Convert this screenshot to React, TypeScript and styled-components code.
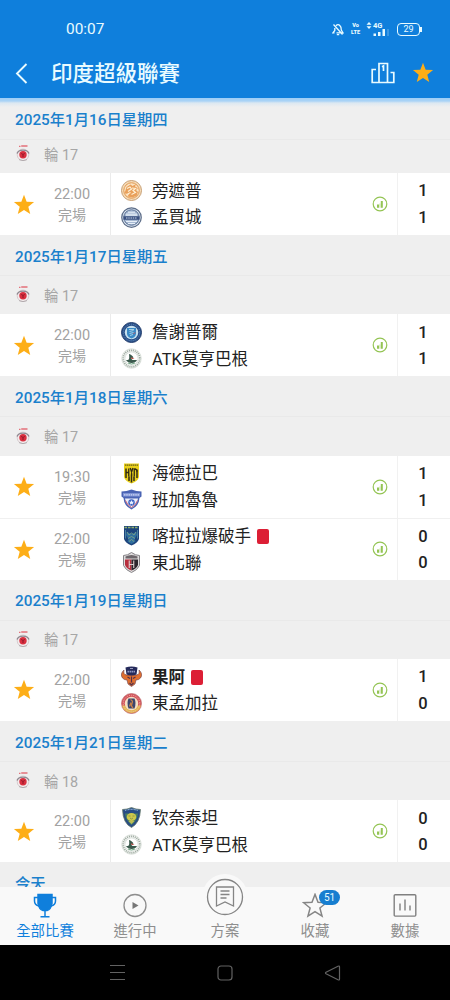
import React from 'react'
import styled, { createGlobalStyle } from 'styled-components'

const GlobalStyle = createGlobalStyle`
  * {
    box-sizing: border-box;
  }
  body {
    margin: 0;
    font-family: Roboto, 'Noto Sans CJK TC', sans-serif;
  }
  svg {
    display: block;
  }
`

const BLUE = '#0f7fdc'
const ORANGE = '#fdae17'

const Screen = styled.div`
  width: 450px;
  height: 1000px;
  display: flex;
  flex-direction: column;
  overflow: hidden;
  background: #efefef;
`

const Header = styled.header`
  height: 98px;
  flex: none;
  background: ${BLUE};
  color: #e9fbff;
`

const StatusBar = styled.div`
  height: 57px;
  padding: 1px 28px 0 66px;
  display: flex;
  align-items: center;
`

const Clock = styled.span`
  font-size: 15.4px;
  flex-grow: 1;
`

const StatusIcons = styled.div`
  display: flex;
  align-items: center;
`

const VoLte = styled.div`
  width: 11px;
  margin: 0 5px 0 6px;
  display: flex;
  flex-direction: column;
  align-items: center;
  font-size: 5.6px;
  font-weight: 900;
  line-height: 6.6px;
`

const Signal = styled.div`
  width: 26px;
  margin-right: 5px;
  display: flex;
  flex-direction: column;
`

const Network = styled.div`
  display: flex;
  align-items: center;
  gap: 1px;
  font-size: 7.5px;
  font-weight: 700;
  line-height: 6px;
`

const Battery = styled.div`
  display: flex;
  align-items: center;

  &::after {
    content: '';
    width: 2px;
    height: 5px;
    background: #e9fbff;
  }
`

const BatteryLevel = styled.span`
  width: 23px;
  height: 13px;
  border: 1.5px solid #e9fbff;
  border-radius: 4px;
  font-size: 9px;
  line-height: 11px;
  text-align: center;
`

const TitleBar = styled.div`
  height: 33px;
  padding: 0 16px 0 15px;
  display: flex;
  align-items: center;
`

const Title = styled.h1`
  margin: 0 0 0 21px;
  font-size: 21.5px;
  line-height: 33px;
  font-weight: 500;
  flex-grow: 1;
`

const TitleActions = styled.div`
  display: flex;
  align-items: center;
  gap: 17px;
  padding-bottom: 2px;
`

const List = styled.main`
  flex: 1;
  min-height: 0;
  overflow: hidden;
  background: linear-gradient(#9dcdf6 0, #a9d3f6 3px, #dce8f1 5px, #efefef 9px);
`

const DateRow = styled.div<{ $sticky?: boolean }>`
  height: ${props => (props.$sticky ? 42 : 41.1)}px;
  padding: 0 15px 1px;
  display: flex;
  align-items: center;
  border-bottom: 1px solid #e9e9e9;
  color: #1a80cc;
  font-size: 15.3px;
  font-weight: 500;
  white-space: nowrap;
`

const RoundRow = styled.div<{ $first?: boolean }>`
  height: ${props => (props.$first ? 33 : 38.1)}px;
  padding: 0 15px ${props => (props.$first ? 7 : 2)}px;
  display: flex;
  align-items: center;
  gap: 13px;
  color: #a6a6a6;
  font-size: 14.4px;
`

const MatchRow = styled.div`
  height: 62.1px;
  display: flex;
  background: #fff;

  & + & {
    border-top: 1px solid #f0f0f0;
  }
`

const StarCell = styled.div`
  width: 48px;
  padding-top: 1px;
  display: flex;
  align-items: center;
  justify-content: center;
`

const TimeCell = styled.div`
  width: 63px;
  padding: 2px 14px 0 0;
  border-right: 1px solid #ebebeb;
  display: flex;
  flex-direction: column;
  align-items: center;
  justify-content: center;
  color: #a2a2a2;
  font-size: 14.5px;
  line-height: 20px;
`

const Status = styled.span`
  font-size: 14px;
`

const Teams = styled.div`
  flex: 1;
  padding-left: 10px;
  display: flex;
  flex-direction: column;
  justify-content: center;
`

const Team = styled.div<{ $bold?: boolean }>`
  height: 26.6px;
  display: flex;
  align-items: center;
  color: #222;
  font-size: 16.5px;
  font-weight: ${props => (props.$bold ? 700 : 400)};
  white-space: nowrap;
`

const TeamName = styled.span`
  margin-left: 10px;
  padding-top: 2px;
  line-height: 24px;
`

const RedCard = styled.span`
  width: 12px;
  height: 15px;
  margin: 1px 0 0 6px;
  border-radius: 2px;
  background: #dc1f35;
`

const StatsCell = styled.div`
  width: 35px;
  display: flex;
  align-items: center;
  justify-content: center;
`

const ScoreCell = styled.div`
  width: 53px;
  padding: 2px 2px 0 0;
  border-left: 1px solid #f1f1f1;
  display: flex;
  flex-direction: column;
  align-items: center;
  justify-content: center;
  color: #222;
  font-size: 16.5px;
  font-weight: 500;
  line-height: 26.6px;
`

const Nav = styled.nav`
  height: 58px;
  flex: none;
  display: flex;
  background: #f9f9f9;
`

const NavItem = styled.div<{ $active?: boolean }>`
  width: 90px;
  position: relative;
  padding-top: 6px;
  display: flex;
  flex-direction: column;
  align-items: center;
  color: ${props => (props.$active ? BLUE : '#8e8e8e')};
  font-size: 14.4px;
  line-height: 25px;
`

const NavLabel = styled.span`
  margin-top: 1px;
  white-space: nowrap;
`

// raised round button in the middle of the tab bar
const PlanButton = styled.div`
  position: absolute;
  left: 22px;
  top: -13px;
  width: 46px;
  height: 46px;
  border-radius: 50%;
  background: #f9f9f9;
  display: flex;
  align-items: center;
  justify-content: center;
`

const PlanSpacer = styled.div`
  height: 25px;
`

const Badge = styled.span`
  position: absolute;
  left: 49px;
  top: 3px;
  width: 21px;
  height: 15px;
  border-radius: 8px;
  background: #177ed0;
  color: #e9fbff;
  font-size: 10px;
  line-height: 15px;
  text-align: center;
`

const SystemBar = styled.footer`
  height: 55px;
  flex: none;
  padding: 0 109px;
  display: flex;
  align-items: center;
  justify-content: space-between;
  background: #000;
`

const STAR = 'M12 0.8l2.9 7.6 8.1.4-6.3 5.1 2.1 7.9L12 17.4l-6.8 4.4 2.1-7.9L1 8.8l8.1-.4z'

const StarIcon = ({ size = 22 }: { size?: number }) => (
  <svg width={size} height={size} viewBox="0 0 24 24" fill={ORANGE}>
    <path d={STAR} />
  </svg>
)

const StatsIcon = () => (
  <svg width="16" height="16" viewBox="0 0 16 16" fill="none" stroke="#94c454">
    <circle cx="8" cy="8" r="6.8" strokeWidth="1.2" />
    <path d="M6 11.700V8.500M9.800 11.700V5" strokeWidth="2" />
    <path d="M7.900 11.700V7.500" strokeWidth=".8" opacity=".6" />
  </svg>
)

const LeagueLogo = () => (
  <svg width="16" height="18" viewBox="0 0 16 18">
    <path d="M4 2.300h1.500M6.200 2h6.300" stroke="#e4707a" strokeWidth="1.300" />
    <circle cx="8" cy="10.800" r="5.800" fill="#f3ebec" stroke="#cfc5c8" strokeWidth=".8" />
    <path d="M2 9.500C3.500 5 12.500 5 14 9.500" fill="none" stroke="#8f8790" strokeWidth="1.300" />
    <circle cx="8" cy="10.800" r="3.700" fill="#d92f3f" />
    <path d="M6.300 9.500l1.700 1 1.700-1M8 11v2" stroke="#8d1627" fill="none" />
    <path d="M4 15.600q4 2 8 0" fill="none" stroke="#a9a2a6" strokeWidth=".8" />
  </svg>
)

const CRESTS: Record<string, React.ReactNode> = {
  punjab: (
    <>
      <circle cx="21" cy="21" r="20" fill="#f6dcb8" stroke="#c79f74" strokeWidth="2" />
      <circle cx="21" cy="21" r="15.500" fill="#f9e3c4" stroke="#e29a52" strokeWidth="2" />
      <path d="M7 27l4-13 8-5 4 3 7-4-2 5 6 3-4 4 4 4-3 8-9 3-9-2 3-5z" fill="#e9a05a" />
      <path d="M12 17l6-3 3 4-7 5M22 16l7 1-5 4 5 4-8 4M13 28l6-3" stroke="#fff0d4" strokeWidth="2.400" fill="none" />
    </>
  ),
  mumbai: (
    <>
      <circle cx="21" cy="21" r="19.500" fill="#dce7f2" stroke="#5d6d88" strokeWidth="2.500" />
      <circle cx="21" cy="21" r="15.500" fill="#a8bad3" stroke="#5c7194" strokeWidth="2" />
      <path d="M10 13h22v5H10z" fill="#d3dfec" />
      <path d="M5 18.500h32v7H5z" fill="#3a5180" />
      <path d="M10 22h22" stroke="#c9d7e8" strokeWidth="2" strokeDasharray="3 1.500" />
      <path d="M10 29h22M14 33h14M14 10.500h14" stroke="#e7eff8" strokeWidth="2" />
    </>
  ),
  jamshedpur: (
    <>
      <circle cx="21" cy="21" r="20" fill="#2a4f88" stroke="#26406f" strokeWidth="2" />
      <circle cx="21" cy="21" r="16.500" fill="none" stroke="#6290bd" strokeWidth="2" strokeDasharray="2 2" />
      <circle cx="21" cy="21" r="13.500" fill="#c6e0ee" />
      <path d="M12 12h18v12q-1 6-9 9-8-3-9-9z" fill="#3b8ac6" />
      <path d="M16 15h10M17 19l8-2M17 23l8-2M18 27l6-2" stroke="#a5cfe6" strokeWidth="2" fill="none" />
      <path d="M25 24l3-3" stroke="#d14c54" strokeWidth="2" />
    </>
  ),
  atk: (
    <>
      <circle cx="21" cy="21" r="19.500" fill="#f0f3f0" stroke="#d2d8d2" strokeWidth="1.500" />
      <circle cx="21" cy="21" r="16.500" fill="none" stroke="#9aa69d" strokeWidth="3.500" strokeDasharray="2 2" />
      <circle cx="21" cy="21" r="13" fill="#fff" stroke="#c9d2ca" />
      <path d="M10 24c7 1 7-3 6-12 4 1 8 4 9 7l-5 2 3 3h9c-3 8-18 8-22 0z" fill="#3b5a4d" />
      <path d="M20 18l7 4h-6z" fill="#ba4b42" />
      <path d="M14 30q7 4 14 0" fill="none" stroke="#6fa583" strokeWidth="2" />
    </>
  ),
  hyderabad: (
    <>
      <path d="M6 1h30v27q-2 8-15 13Q8 36 6 28z" fill="#e9d01c" />
      <path d="M8 4h26" stroke="#6b6118" strokeWidth="2.500" strokeDasharray="3 1" />
      <path d="M10 11v19M16 27v9M21 23v16M26 27v9M32 13v17" stroke="#302b16" strokeWidth="3" />
      <path d="M10 19h5M15.500 11v16M18.500 10l2.700 8 2.700-8M21.200 17v8M26.500 11v16M27 11.500q5 1 5 6" stroke="#302b16" strokeWidth="2.600" fill="none" />
    </>
  ),
  bengaluru: (
    <>
      <path d="M1 5q10 0 20-4 10 4 20 4v10l-4 3q-1 16-16 23Q6 34 5 18l-4-3z" fill="#4a64b4" />
      <path d="M8 19h26q-2 13-13 19Q10 32 8 19z" fill="#eceef8" />
      <path d="M4 8h34v7H4z" fill="#7e93d4" />
      <path d="M6 11.500h30" stroke="#cfd9f5" strokeWidth="2.500" strokeDasharray="3 1.500" />
      <circle cx="21" cy="27" r="6.500" fill="#3c63c2" />
      <path d="M21 22l1.500 3.500H26L23.500 28l1 3.500L21 29.500l-3.500 2 1-3.500-2.500-2.500h3.500z" fill="#e8f0ff" />
      <path d="M9 23q3 9 12 14 9-5 12-14" stroke="#cb5368" strokeWidth="1.800" fill="none" />
    </>
  ),
  kerala: (
    <>
      <path d="M6 2h30v26q-3 8-15 13Q9 36 6 28z" fill="#1d447c" />
      <path d="M7 5h28" stroke="#8fae6a" strokeWidth="3" strokeDasharray="5 2" />
      <path d="M12 13q9 9 18 0l2 7-5 8 2 5-8 5-8-5 2-5-5-8z" fill="#2f6f9e" />
      <path d="M12 14l4 6 5-4 5 4 4-6M14 27l7-4 7 4M16 33l5-4 5 4" stroke="#86aa85" strokeWidth="1.600" fill="none" />
      <path d="M9 10v17M33 10v17" stroke="#5a96ae" strokeWidth="1.500" />
    </>
  ),
  northeast: (
    <>
      <path d="M5 7q8 0 16-6 8 6 16 6v20q-4 9-16 14Q9 36 5 27z" fill="#dedcdd" stroke="#858286" strokeWidth="2" />
      <path d="M9 9q12-6 24 0v4H9z" fill="#6d666b" />
      <path d="M8 15h13v22Q11 33 8 26z" fill="#b82f3e" />
      <path d="M21 15h13v11q-3 7-13 11z" fill="#2c262d" />
      <path d="M16.500 17v15M25.500 17v15M17 25h8" stroke="#dccfcf" strokeWidth="2.200" />
    </>
  ),
  goa: (
    <>
      <path
        d="M6 8q-9 8-3 16 3 4 9 4l2 8 7 5 7-5 2-8q6 0 9-4 6-8-3-16 2 9-5 10H11Q4 17 6 8z"
        fill="#df6f30"
        stroke="#6c3b45"
        strokeWidth="1.200"
      />
      <path d="M9 3q12-4 24 0l-2 14q-10 4-20 0z" fill="#252a5b" />
      <path d="M13 11h16" stroke="#8f96c2" strokeWidth="3.500" strokeDasharray="3 1" />
      <path d="M18 5h6" stroke="#b9bddb" strokeWidth="1.500" />
      <path d="M13 22l5 3M29 22l-5 3M21 21v12M17 34l4 4 4-4" stroke="#54304a" strokeWidth="2.300" fill="none" />
    </>
  ),
  eastBengal: (
    <>
      <circle cx="21" cy="21" r="20" fill="#d3525b" stroke="#bf7072" strokeWidth="1.500" />
      <path d="M2 25a19.500 19.500 0 0 0 38 0z" fill="#e3b552" />
      <circle cx="21" cy="21" r="16.500" fill="none" stroke="#f1cfbb" strokeWidth="1.600" strokeDasharray="2 2" />
      <circle cx="21" cy="21" r="13.500" fill="#f6e0c4" />
      <path d="M15 11h12q4 9 0 20H15q-4-11 0-20z" fill="#3c466e" />
      <path d="M19 13q6 3 3 8t2 9M17 27l3-8" stroke="#c98148" strokeWidth="2.500" fill="none" />
    </>
  ),
  chennaiyin: (
    <>
      <path d="M3 5q9 0 18-4 9 4 18 4-1 27-18 36Q4 33 3 5z" fill="#284c86" stroke="#5f7465" strokeWidth="1.500" />
      <path d="M8 7q13-5 26 0" stroke="#86a8ca" strokeWidth="2.500" fill="none" strokeDasharray="2 1" />
      <path d="M8 13h26q-2 15-13 23Q10 28 8 13z" fill="#4a7f62" />
      <ellipse cx="21" cy="20" rx="9.500" ry="8" fill="#cfc84c" />
      <path d="M15 18h4M23 18h4M18 22l3 2 3-2" stroke="#7c8a49" strokeWidth="1.600" fill="none" />
      <path d="M15 28h12l-6 6z" fill="#bdbd55" />
    </>
  ),
}

const Crest = ({ name }: { name: string }) => (
  <svg width="21" height="21" viewBox="0 0 42 42">
    {CRESTS[name]}
  </svg>
)

type Side = { crest: string; name: string; score: number; red?: boolean; bold?: boolean }
type Match = { time: string; sides: Side[] }
type Day = { date: string; round: string; matches: Match[] }

const days: Day[] = [
  {
    date: '2025年1月16日星期四',
    round: '輪 17',
    matches: [
      {
        time: '22:00',
        sides: [
          { crest: 'punjab', name: '旁遮普', score: 1 },
          { crest: 'mumbai', name: '孟買城', score: 1 },
        ],
      },
    ],
  },
  {
    date: '2025年1月17日星期五',
    round: '輪 17',
    matches: [
      {
        time: '22:00',
        sides: [
          { crest: 'jamshedpur', name: '詹謝普爾', score: 1 },
          { crest: 'atk', name: 'ATK莫亨巴根', score: 1 },
        ],
      },
    ],
  },
  {
    date: '2025年1月18日星期六',
    round: '輪 17',
    matches: [
      {
        time: '19:30',
        sides: [
          { crest: 'hyderabad', name: '海德拉巴', score: 1 },
          { crest: 'bengaluru', name: '班加魯魯', score: 1 },
        ],
      },
      {
        time: '22:00',
        sides: [
          { crest: 'kerala', name: '喀拉拉爆破手', score: 0, red: true },
          { crest: 'northeast', name: '東北聯', score: 0 },
        ],
      },
    ],
  },
  {
    date: '2025年1月19日星期日',
    round: '輪 17',
    matches: [
      {
        time: '22:00',
        sides: [
          { crest: 'goa', name: '果阿', score: 1, red: true, bold: true },
          { crest: 'eastBengal', name: '東孟加拉', score: 0 },
        ],
      },
    ],
  },
  {
    date: '2025年1月21日星期二',
    round: '輪 18',
    matches: [
      {
        time: '22:00',
        sides: [
          { crest: 'chennaiyin', name: '钦奈泰坦', score: 0 },
          { crest: 'atk', name: 'ATK莫亨巴根', score: 0 },
        ],
      },
    ],
  },
]

const MatchItem: React.FC<{ match: Match }> = ({ match }) => (
  <MatchRow>
    <StarCell>
      <StarIcon />
    </StarCell>
    <TimeCell>
      <span>{match.time}</span>
      <Status>完場</Status>
    </TimeCell>
    <Teams>
      {match.sides.map(side => (
        <Team key={side.name} $bold={side.bold}>
          <Crest name={side.crest} />
          <TeamName>{side.name}</TeamName>
          {side.red && <RedCard />}
        </Team>
      ))}
    </Teams>
    <StatsCell>
      <StatsIcon />
    </StatsCell>
    <ScoreCell>
      {match.sides.map(side => (
        <span key={side.name}>{side.score}</span>
      ))}
    </ScoreCell>
  </MatchRow>
)

const App = () => (
  <Screen>
    <GlobalStyle />
    <Header>
      <StatusBar>
        <Clock>00:07</Clock>
        <StatusIcons>
          <svg width="12" height="13" viewBox="0 0 12 13" fill="none" stroke="#e9fbff" strokeWidth="1.300">
            <path d="M4 2.800Q6 .5 8 2.800 9.300 4 9.300 7L11 9.800H4.500M2.800 5v2.500L1 9.800h1.500M4.800 11.700h2.400M1.500 1.500l9 10" />
          </svg>
          <VoLte>
            <span>Vo</span>
            <span>LTE</span>
          </VoLte>
          <Signal>
            <Network>
              <svg width="6" height="7" viewBox="0 0 6 7" fill="#e9fbff">
                <path d="M3 0l2.500 2.800h-5zM3 7L.5 4.200h5z" />
              </svg>
              4G
            </Network>
            <svg width="26" height="7" viewBox="0 0 26 7" fill="#e9fbff">
              <path d="M7.500 4.500H10V7H7.500zM12 3h2.500v4H12zM16.500 0H19v7h-2.500z" />
              <path d="M21.500 0h1v7h-1z" opacity=".4" />
            </svg>
          </Signal>
          <Battery>
            <BatteryLevel>29</BatteryLevel>
          </Battery>
        </StatusIcons>
      </StatusBar>
      <TitleBar>
        <svg width="15" height="22" viewBox="0 0 15 22" fill="none" stroke="#e9fbff" strokeWidth="1.900">
          <path d="M11.500 1L2 10.500l9.500 9.500" />
        </svg>
        <Title>印度超級聯賽</Title>
        <TitleActions>
          <svg width="24" height="22" viewBox="0 0 24 22" fill="none" stroke="#e9fbff" strokeWidth="1.700">
            <path d="M8 20.500V1.500h8.500v19M5 7.500H1.200v13h21.600v-10H19.500M11 4.700l1.500-.8v5" />
          </svg>
          <StarIcon size={22} />
        </TitleActions>
      </TitleBar>
    </Header>

    <List>
      {days.map((day, i) => (
        <section key={day.date}>
          <DateRow $sticky={i === 0}>{day.date}</DateRow>
          <RoundRow $first={i === 0}>
            <LeagueLogo />
            {day.round}
          </RoundRow>
          {day.matches.map(match => (
            <MatchItem key={match.sides[0].name} match={match} />
          ))}
        </section>
      ))}
      <DateRow>今天</DateRow>
    </List>

    <Nav>
      <NavItem $active>
        <svg width="24" height="25" viewBox="0 0 24 25" fill="none" stroke={BLUE} strokeWidth="1.500">
          <path d="M5 1.500h14v9q-1 6-5 7h-4q-4-1-5-7z" fill={BLUE} />
          <path d="M5 4.500H1.500v3.500q0 4 4.500 5M19 4.500h3.500V8q0 4-4.500 5M12 18v5.500M7.500 23.700h9" />
        </svg>
        <NavLabel>全部比賽</NavLabel>
      </NavItem>
      <NavItem>
        <svg width="24" height="25" viewBox="0 0 24 25" fill="none" stroke="#8e8e8e" strokeWidth="1.300">
          <circle cx="12" cy="12.500" r="11" />
          <path d="M9.500 9l6 3.500-6 3.500z" fill="#777" stroke="none" />
        </svg>
        <NavLabel>進行中</NavLabel>
      </NavItem>
      <NavItem>
        <PlanButton>
          <svg width="38" height="38" viewBox="0 0 38 38" fill="none" stroke="#858585" strokeWidth="1.300">
            <circle cx="19" cy="19" r="17.500" />
            <path d="M10.500 9h17v19L19 24l-8.500 4zM14.500 13h9M14.500 16.500h9M14.500 20h6" />
          </svg>
        </PlanButton>
        <PlanSpacer />
        <NavLabel>方案</NavLabel>
      </NavItem>
      <NavItem>
        <svg width="26" height="25" viewBox="-.5 -.5 25 24" fill="none" stroke="#858585" strokeWidth="1.400">
          <path d={STAR} />
        </svg>
        <Badge>51</Badge>
        <NavLabel>收藏</NavLabel>
      </NavItem>
      <NavItem>
        <svg width="24" height="25" viewBox="0 0 24 25" fill="none" stroke="#808080" strokeWidth="1.400">
          <rect x="1.200" y="1.700" width="21.600" height="21.400" rx="1" />
          <path d="M7 10.500v7M12 6.500v11M17 12.500v5" />
        </svg>
        <NavLabel>數據</NavLabel>
      </NavItem>
    </Nav>

    <SystemBar>
      <svg width="17" height="17" viewBox="0 0 17 17" stroke="#626262" strokeWidth="1.200">
        <path d="M1 1.500h15M1 8.500h15M1 15.500h15" />
      </svg>
      <svg width="16" height="16" viewBox="0 0 16 16" fill="none" stroke="#626262" strokeWidth="1.200">
        <rect x="1" y="1" width="14" height="14" rx="3" />
      </svg>
      <svg width="17" height="16" viewBox="0 0 17 16" fill="none" stroke="#626262" strokeWidth="1.200">
        <path d="M15.500 2v12q0 1.500-1.500.8L2 8.700q-1-.7 0-1.400l12-6.100q1.500-.7 1.500.8z" />
      </svg>
    </SystemBar>
  </Screen>
)

export default App
